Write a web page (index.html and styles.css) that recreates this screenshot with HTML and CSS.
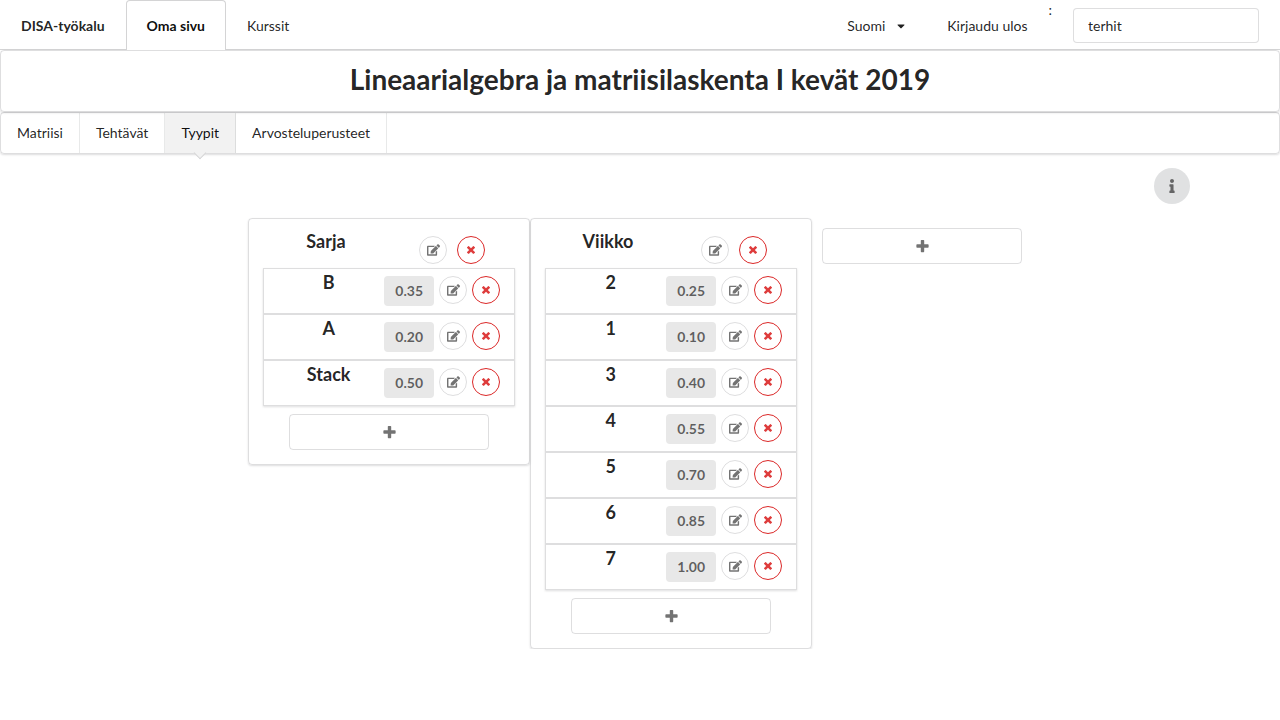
FILE: index.html
```html
<!DOCTYPE html>
<html lang="fi">
<head>
<meta charset="utf-8">
<meta name="viewport" content="width=device-width, initial-scale=1">
<title>DISA-työkalu</title>
<link rel="stylesheet" href="styles.css">
</head>
<body>
<svg class="sprite" aria-hidden="true">
  <symbol id="edit" viewBox="0 0 576 512"><path d="M402.6 83.2l90.2 90.2c3.8 3.8 3.8 10 0 13.8L274.4 405.6l-92.8 10.3c-12.4 1.4-22.9-9.1-21.5-21.5l10.3-92.8L388.8 83.2c3.8-3.8 10-3.8 13.8 0zm162-22.9l-48.8-48.8c-15.2-15.2-39.9-15.2-55.2 0l-35.4 35.4c-3.8 3.8-3.8 10 0 13.8l90.2 90.2c3.8 3.8 10 3.8 13.8 0l35.4-35.4c15.2-15.3 15.2-40 0-55.2zM384 346.2V448H64V128h229.8c3.2 0 6.2-1.3 8.5-3.5l40-40c7.6-7.6 2.2-20.5-8.5-20.5H48C21.5 64 0 85.5 0 112v352c0 26.5 21.5 48 48 48h352c26.5 0 48-21.5 48-48V306.2c0-10.7-12.9-16-20.5-8.5l-40 40c-2.2 2.3-3.5 5.3-3.5 8.5z"/></symbol>
  <symbol id="times" viewBox="0 0 384 512"><path d="M323.1 441l53.9-53.9c9.4-9.4 9.4-24.5 0-33.9L279.8 256l97.2-97.2c9.4-9.4 9.4-24.5 0-33.9L323.1 71c-9.4-9.4-24.5-9.4-33.9 0L192 168.2 94.8 71c-9.4-9.4-24.5-9.4-33.9 0L7 124.9c-9.4 9.4-9.4 24.5 0 33.9l97.2 97.2L7 353.2c-9.4 9.4-9.4 24.5 0 33.9L60.9 441c9.4 9.4 24.5 9.4 33.9 0l97.2-97.2 97.2 97.2c9.3 9.3 24.5 9.3 33.9 0z"/></symbol>
  <symbol id="plus" viewBox="0 0 448 512"><path d="M448 294.2v-76.4c0-13.3-10.7-24-24-24H286.2V56c0-13.3-10.7-24-24-24h-76.4c-13.3 0-24 10.7-24 24v137.8H24c-13.3 0-24 10.7-24 24v76.4c0 13.3 10.7 24 24 24h137.8V456c0 13.3 10.7 24 24 24h76.4c13.3 0 24-10.7 24-24V318.2H424c13.3 0 24-10.7 24-24z"/></symbol>
  <symbol id="info" viewBox="0 0 192 512"><path d="M20 424.229h20V279.771H20c-11.046 0-20-8.954-20-20V212c0-11.046 8.954-20 20-20h112c11.046 0 20 8.954 20 20v212.229h20c11.046 0 20 8.954 20 20V492c0 11.046-8.954 20-20 20H20c-11.046 0-20-8.954-20-20v-47.771c0-11.046 8.954-20 20-20zM96 0C56.235 0 24 32.235 24 72s32.235 72 72 72 72-32.235 72-72S135.764 0 96 0z"/></symbol>
  <symbol id="caret" viewBox="0 0 320 512"><path d="M31.3 192h257.3c17.8 0 26.7 21.5 14.1 34.1L174.1 354.8c-7.8 7.8-20.5 7.8-28.3 0L17.2 226.1C4.6 213.5 13.5 192 31.3 192z"/></symbol>
</svg>

<nav class="topbar">
  <a class="tab brand" href="#">DISA-työkalu</a>
  <a class="tab active" href="#" aria-current="page">Oma sivu</a>
  <a class="tab" href="#">Kurssit</a>
  <div class="topbar-right">
    <div class="language">
      <select class="language-select" aria-label="Kieli"><option>Suomi</option></select>
      <svg class="icon-caret" aria-hidden="true"><use href="#caret"/></svg>
    </div>
    <a class="tab" href="#">Kirjaudu ulos</a>
    <div class="user">
      <label for="user">:</label>
      <input class="user-input" id="user" type="text" value="terhit">
    </div>
  </div>
</nav>

<header class="course"><h1 class="course-title">Lineaarialgebra ja matriisilaskenta I kevät 2019</h1></header>

<nav class="submenu">
  <a class="submenu-item" href="#">Matriisi</a>
  <a class="submenu-item" href="#">Tehtävät</a>
  <a class="submenu-item current" href="#" aria-current="page">Tyypit</a>
  <a class="submenu-item" href="#">Arvosteluperusteet</a>
</nav>

<main>
  <div class="help">
    <button class="info-button" aria-label="Ohje"><svg class="icon-info"><use href="#info"/></svg></button>
  </div>
  <div class="board">
    <section class="card">
      <div class="card-head">
        <h2 class="name">Sarja</h2>
        <div class="card-actions">
          <button class="round" aria-label="Muokkaa"><svg class="icon-edit"><use href="#edit"/></svg></button>
          <button class="round red" aria-label="Poista"><svg class="icon-times"><use href="#times"/></svg></button>
        </div>
      </div>
      <div class="types">
        <div class="type"><h3 class="name">B</h3><div class="type-actions"><span class="value">0.35</span><button class="round" aria-label="Muokkaa"><svg class="icon-edit"><use href="#edit"/></svg></button><button class="round red" aria-label="Poista"><svg class="icon-times"><use href="#times"/></svg></button></div></div>
        <div class="type"><h3 class="name">A</h3><div class="type-actions"><span class="value">0.20</span><button class="round" aria-label="Muokkaa"><svg class="icon-edit"><use href="#edit"/></svg></button><button class="round red" aria-label="Poista"><svg class="icon-times"><use href="#times"/></svg></button></div></div>
        <div class="type"><h3 class="name">Stack</h3><div class="type-actions"><span class="value">0.50</span><button class="round" aria-label="Muokkaa"><svg class="icon-edit"><use href="#edit"/></svg></button><button class="round red" aria-label="Poista"><svg class="icon-times"><use href="#times"/></svg></button></div></div>
      </div>
      <button class="add" aria-label="Lisää tyyppi"><svg class="icon-plus"><use href="#plus"/></svg></button>
    </section>
    <section class="card">
      <div class="card-head">
        <h2 class="name">Viikko</h2>
        <div class="card-actions">
          <button class="round" aria-label="Muokkaa"><svg class="icon-edit"><use href="#edit"/></svg></button>
          <button class="round red" aria-label="Poista"><svg class="icon-times"><use href="#times"/></svg></button>
        </div>
      </div>
      <div class="types">
        <div class="type"><h3 class="name">2</h3><div class="type-actions"><span class="value">0.25</span><button class="round" aria-label="Muokkaa"><svg class="icon-edit"><use href="#edit"/></svg></button><button class="round red" aria-label="Poista"><svg class="icon-times"><use href="#times"/></svg></button></div></div>
        <div class="type"><h3 class="name">1</h3><div class="type-actions"><span class="value">0.10</span><button class="round" aria-label="Muokkaa"><svg class="icon-edit"><use href="#edit"/></svg></button><button class="round red" aria-label="Poista"><svg class="icon-times"><use href="#times"/></svg></button></div></div>
        <div class="type"><h3 class="name">3</h3><div class="type-actions"><span class="value">0.40</span><button class="round" aria-label="Muokkaa"><svg class="icon-edit"><use href="#edit"/></svg></button><button class="round red" aria-label="Poista"><svg class="icon-times"><use href="#times"/></svg></button></div></div>
        <div class="type"><h3 class="name">4</h3><div class="type-actions"><span class="value">0.55</span><button class="round" aria-label="Muokkaa"><svg class="icon-edit"><use href="#edit"/></svg></button><button class="round red" aria-label="Poista"><svg class="icon-times"><use href="#times"/></svg></button></div></div>
        <div class="type"><h3 class="name">5</h3><div class="type-actions"><span class="value">0.70</span><button class="round" aria-label="Muokkaa"><svg class="icon-edit"><use href="#edit"/></svg></button><button class="round red" aria-label="Poista"><svg class="icon-times"><use href="#times"/></svg></button></div></div>
        <div class="type"><h3 class="name">6</h3><div class="type-actions"><span class="value">0.85</span><button class="round" aria-label="Muokkaa"><svg class="icon-edit"><use href="#edit"/></svg></button><button class="round red" aria-label="Poista"><svg class="icon-times"><use href="#times"/></svg></button></div></div>
        <div class="type"><h3 class="name">7</h3><div class="type-actions"><span class="value">1.00</span><button class="round" aria-label="Muokkaa"><svg class="icon-edit"><use href="#edit"/></svg></button><button class="round red" aria-label="Poista"><svg class="icon-times"><use href="#times"/></svg></button></div></div>
      </div>
      <button class="add" aria-label="Lisää tyyppi"><svg class="icon-plus"><use href="#plus"/></svg></button>
    </section>
    <button class="add add-header" aria-label="Lisää otsake"><svg class="icon-plus"><use href="#plus"/></svg></button>
  </div>
</main>
</body>
</html>
```
FILE: styles.css
```css
*, *::before, *::after { box-sizing: border-box; }

body {
  margin: 0;
  background: #fff;
  color: rgba(0, 0, 0, 0.87);
  font: 14px/20px Lato, "Liberation Sans", sans-serif;
}

h1, h2, h3 { margin: 0; font-weight: 700; }
a { color: inherit; text-decoration: none; }
button, input, select { font: inherit; color: inherit; }
button { padding: 0; background: none; border: 0; cursor: pointer; }
svg { display: block; fill: currentColor; }
.sprite { position: absolute; width: 0; height: 0; }

.icon-edit { width: 13px; height: 12px; }
.icon-times { width: 8px; height: 12px; opacity: 0.9; }
.icon-plus { width: 13px; height: 14px; }
.icon-info { width: 6px; height: 14px; }
.icon-caret { width: 8px; height: 12px; }

/* Top navigation */
.topbar {
  display: flex;
  align-items: stretch;
  min-height: 50px;
  box-shadow: inset 0 -1px #d4d4d5;
}
.tab { display: flex; align-items: center; padding: 2px 21px 0; }
.brand { font-weight: 700; }
.tab.active {
  padding: 1px 20px 0;
  background: #fff;
  border: 1px solid #d4d4d5;
  border-bottom: 0;
  border-radius: 4px 4px 0 0;
  color: rgba(0, 0, 0, 0.95);
  font-weight: 700;
}
.topbar-right { display: flex; margin-left: auto; }
.language { display: flex; align-items: center; gap: 11px; padding: 2px 21px 0; }
.language-select { appearance: none; padding: 0; background: none; border: 0; }
.user { display: flex; align-items: flex-start; }
.user-input {
  width: 186px;
  height: 35px;
  margin: 8px 21px 7px;
  padding: 0 14px;
  background: #fff;
  border: 1px solid rgba(34, 36, 38, 0.15);
  border-radius: 4px;
}

/* Course heading */
.course {
  padding: 10px 14px 14px;
  border: 1px solid rgba(34, 36, 38, 0.15);
  border-radius: 4px;
  box-shadow: 0 1px 2px rgba(34, 36, 38, 0.15);
}
.course-title { font-size: 28px; line-height: 36px; text-align: center; }

/* Course sections */
.submenu {
  display: flex;
  border: 1px solid rgba(34, 36, 38, 0.15);
  border-radius: 4px;
  box-shadow: 0 1px 2px rgba(34, 36, 38, 0.15);
}
.submenu-item {
  position: relative;
  padding: 10px 16px;
  border-right: 1px solid rgba(34, 36, 38, 0.1);
}
.submenu-item.current { background: #f2f2f2; color: rgba(0, 0, 0, 0.95); }
.submenu-item.current::after {
  content: "";
  position: absolute;
  top: 100%;
  left: 50%;
  width: 9px;
  height: 9px;
  background: #f2f2f2;
  border: solid #d4d4d5;
  border-width: 0 1px 1px 0;
  transform: translate(-50%, -50%) rotate(45deg);
}

/* Help */
.help { display: flex; justify-content: flex-end; padding: 14px 90px; }
.info-button {
  display: grid;
  place-items: center;
  width: 36px;
  height: 36px;
  background: #e0e1e2;
  border-radius: 50%;
  color: rgba(0, 0, 0, 0.55);
}

/* Type headers */
.board { display: flex; justify-content: center; align-items: flex-start; }
.card {
  display: flex;
  flex-direction: column;
  width: 282px;
  padding: 13px 14px 14px;
  border: 1px solid rgba(34, 36, 38, 0.15);
  border-radius: 4px;
  box-shadow: 0 1px 2px rgba(34, 36, 38, 0.15);
}
.name { font-size: 18px; line-height: 18px; text-align: center; }
.card-head { display: grid; grid-template-columns: 1fr 1fr; }
.card-actions { display: flex; justify-content: center; gap: 10px; padding: 4px 0; }

.round {
  display: grid;
  place-items: center;
  width: 28px;
  height: 28px;
  border: 1px solid rgba(34, 36, 38, 0.15);
  border-radius: 50%;
  color: rgba(0, 0, 0, 0.55);
}
.round.red { border-color: #db2828; color: #db2828; }

.types { box-shadow: 0 1px 2px rgba(34, 36, 38, 0.15); }
.type {
  display: flex;
  gap: 5px;
  padding: 4px 14px 7px;
  border: 1px solid rgba(34, 36, 38, 0.15);
}
.type .name { flex: 1; }
.type-actions { display: flex; align-items: flex-start; gap: 5px; padding-top: 3px; }
.value {
  padding: 5px 11px;
  background: #e8e8e8;
  border-radius: 4px;
  color: rgba(0, 0, 0, 0.6);
  font-weight: 700;
}

.add {
  display: grid;
  place-items: center;
  align-self: center;
  width: 200px;
  height: 36px;
  margin-top: 8px;
  border: 1px solid rgba(34, 36, 38, 0.15);
  border-radius: 4px;
  color: rgba(0, 0, 0, 0.55);
}
.add-header { align-self: flex-start; margin: 10px; }
```
